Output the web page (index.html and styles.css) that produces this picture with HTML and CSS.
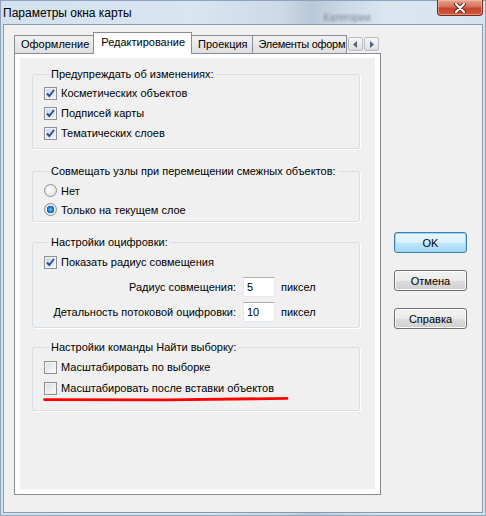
FILE: index.html
```html
<!DOCTYPE html>
<html lang="ru">
<head>
  <meta charset="UTF-8" />
  <title>Параметры окна карты</title>
  <link rel="stylesheet" href="styles.css">
</head>
<body>
  <div class="window">
    <div class="titlebar">
      <span class="title">Параметры окна карты</span>
      <span class="ghost">Категории</span>
      <div class="close">
        <svg width="18" height="10" viewBox="0 0 18 10">
          <path d="M5 1 L13 9 M13 1 L5 9" stroke="#5a2c22" stroke-width="4" stroke-linecap="round"/>
          <path d="M5 1 L13 9 M13 1 L5 9" stroke="#fff" stroke-width="2" stroke-linecap="round"/>
        </svg>
      </div>
    </div>

    <div class="client">
      <div class="tabs-area">
        <div class="tabstrip">
          <div class="tab">Оформление</div>
          <div class="tab active">Редактирование</div>
          <div class="tab">Проекция</div>
          <div class="tab last">Элементы оформ</div>
          <div class="tab-scroll">
            <span class="scroll-btn">
              <svg width="5" height="7" viewBox="0 0 5 7"><path d="M4 0 L0 3.5 L4 7 Z" fill="#4d6185"/></svg>
            </span>
            <span class="scroll-btn">
              <svg width="5" height="7" viewBox="0 0 5 7"><path d="M1 0 L5 3.5 L1 7 Z" fill="#4d6185"/></svg>
            </span>
          </div>
        </div>

        <div class="panel">
          <div class="page">

            <fieldset class="group group-warn">
              <legend>Предупреждать об изменениях:</legend>
              <div class="row"><span class="check on"></span>Косметических объектов</div>
              <div class="row"><span class="check on"></span>Подписей карты</div>
              <div class="row"><span class="check on"></span>Тематических слоев</div>
            </fieldset>

            <fieldset class="group group-snap">
              <legend>Совмещать узлы при перемещении смежных объектов:</legend>
              <div class="row short"><span class="radio"></span>Нет</div>
              <div class="row short"><span class="radio on"></span>Только на текущем слое</div>
            </fieldset>

            <fieldset class="group group-digit">
              <legend>Настройки оцифровки:</legend>
              <div class="row"><span class="check on"></span>Показать радиус совмещения</div>
              <div class="field-row">
                <span class="field-label">Радиус совмещения:</span>
                <span class="input">5</span>
                <span class="unit">пиксел</span>
              </div>
              <div class="field-row">
                <span class="field-label">Детальность потоковой оцифровки:</span>
                <span class="input">10</span>
                <span class="unit">пиксел</span>
              </div>
            </fieldset>

            <fieldset class="group group-find">
              <legend>Настройки команды Найти выборку:</legend>
              <div class="row"><span class="check"></span>Масштабировать по выборке</div>
              <div class="row"><span class="check"></span>Масштабировать после вставки объектов</div>
              <svg class="mark" width="250" height="7" viewBox="0 0 250 7">
                <path d="M1.5 4.6 L122 4.8 L244 3.4" stroke="#ff0000" stroke-width="2.8" fill="none" stroke-linecap="round"/>
              </svg>
            </fieldset>

          </div>
        </div>
      </div>

      <div class="buttons">
        <button class="btn default">OK</button>
        <button class="btn">Отмена</button>
        <button class="btn">Справка</button>
      </div>
    </div>
  </div>
</body>
</html>
```

FILE: styles.css
```css
body {
  margin: 0;
  font-family: 'Liberation Sans', Arial, sans-serif;
  font-size: 11px;
  color: #000;
  background: #fff;
}

.window {
  width: 486px;
  height: 516px;
  display: flex;
  flex-direction: column;
  background: linear-gradient(90deg, #d3e1ef 0%, #d9e5f1 40%, #ccd9e6 58%, #b9c8d8 64%, #c9d6e4 70%, #dbe6f1 80%, #d6e2ee 100%);
  box-sizing: border-box;
  border: 1px solid #8ea4bd;
}

/* title bar */
.titlebar {
  height: 23px;
  display: flex;
  align-items: flex-start;
}

.title {
  font-size: 12px;
  margin: 5px 0 0 2px;
  color: #000;
}

.ghost {
  font-size: 10px;
  color: #7d8a99;
  filter: blur(1.2px);
  margin: 11px 0 0 192px;
}

.close {
  margin-left: auto;
  margin-right: 2px;
  margin-top: -1px;
  width: 44px;
  height: 15px;
  border: 1px solid #6b2e24;
  border-top: none;
  border-radius: 0 0 4px 4px;
  background: linear-gradient(#e8a393 0%, #d6705a 45%, #c7442b 55%, #d0593d 100%);
  box-shadow: inset 0 0 0 1px rgba(255, 200, 180, 0.5);
  display: flex;
  align-items: center;
  justify-content: center;
}

/* client area */
.client {
  flex: 1;
  margin: 0 2px 2px 2px;
  border: 1px solid #8a9bb0;
  background: #f0f0f0;
  display: flex;
  align-items: flex-start;
}

.tabs-area {
  margin: 7px 0 0 10px;
  width: 367px;
}

.tabstrip {
  display: flex;
  align-items: flex-end;
  height: 21px;
}

.tab {
  height: 17px;
  line-height: 17px;
  padding: 0 4px 0 6px;
  border: 1px solid #898c95;
  border-bottom: none;
  border-right: none;
  background: linear-gradient(#f2f2f2, #dedede);
  white-space: nowrap;
}

.tab.active {
  height: 21px;
  line-height: 19px;
  margin-bottom: -1px;
  padding: 0 6px 0 7px;
  background: #fff;
  border-right: 1px solid #898c95;
  position: relative;
  z-index: 1;
}

.tab.active + .tab {
  border-left: none;
}

.tab.last {
  padding-right: 1px;
  letter-spacing: -0.3px;
  border-right: 1px solid #898c95;
}

.tab-scroll {
  display: flex;
  gap: 1px;
  margin: 0 0 2px 1px;
}

.scroll-btn {
  width: 13px;
  height: 12px;
  border: 1px solid #b8bcc4;
  border-radius: 2px;
  background: linear-gradient(#f6f6f6, #dfdfdf);
  display: flex;
  align-items: center;
  justify-content: center;
}

.panel {
  height: 431px;
  border: 1px solid #898c95;
  background: #fff;
  padding: 4px 5px 5px 5px;
}

.page {
  height: 100%;
  background: #f0f0f0;
  padding: 10px 15px 0 12px;
  box-sizing: border-box;
}

/* group boxes */
.group {
  margin: 0;
  padding: 2px 0 5px 11px;
  border: 1px solid #d5dfe5;
  border-radius: 3px;
  box-shadow: 1px 1px 0 #fff;
  min-width: 0;
}

.group legend {
  padding: 0 2px;
  margin-left: 5px;
  line-height: 13px;
}

.group-snap {
  margin-top: 16px;
  padding-top: 3px;
  padding-bottom: 2px;
}

.group-digit {
  margin-top: 14px;
  padding-top: 3px;
  padding-bottom: 5px;
}

.group-find {
  margin-top: 13px;
  padding-top: 3px;
  padding-bottom: 12px;
  position: relative;
}

.row {
  height: 20px;
  display: flex;
  align-items: center;
  gap: 4px;
}

.row.short {
  height: 19px;
}

.group-find .row + .row {
  margin-top: 1px;
}

.check {
  width: 11px;
  height: 11px;
  border: 1px solid #8e8f8f;
  background: linear-gradient(135deg, #dcdcdc, #fbfbfb);
  box-shadow: inset 0 0 0 1px #f4f4f4;
  flex-shrink: 0;
}

.check.on {
  background:
    url("data:image/svg+xml,%3Csvg xmlns='http://www.w3.org/2000/svg' width='11' height='11'%3E%3Cpath d='M2 5.5 L4.3 8 L9 2' stroke='%23334e8c' stroke-width='2' fill='none'/%3E%3C/svg%3E"),
    linear-gradient(135deg, #c7d6ec, #eef3fb);
}

.radio {
  width: 11px;
  height: 11px;
  border: 1px solid #8e8f8f;
  border-radius: 50%;
  background: radial-gradient(circle at 40% 40%, #fff, #d8d8d8);
  flex-shrink: 0;
}

.radio.on {
  background: radial-gradient(circle, #5fc6f6 0, #1e7fc9 2.5px, #194f9a 3.5px, #e8eef6 4px, #d0d6de 100%);
}

.field-row {
  height: 20px;
  display: flex;
  align-items: center;
  margin-top: 5px;
}

.field-label {
  width: 194px;
  text-align: right;
  margin-left: -2px;
}

.input {
  width: 27px;
  height: 18px;
  line-height: 18px;
  margin-left: 7px;
  padding-left: 3px;
  background: #fff;
  border: 1px solid #e3e9ef;
  border-top-color: #abadb3;
}

.unit {
  margin-left: 6px;
}

.mark {
  position: absolute;
  left: 10px;
  bottom: 8px;
}

/* dialog buttons */
.buttons {
  margin: 207px 0 0 13px;
  display: flex;
  flex-direction: column;
  gap: 17px;
}

.btn {
  width: 73px;
  height: 21px;
  font-family: inherit;
  font-size: 11px;
  border: 1px solid #707070;
  border-radius: 3px;
  background: linear-gradient(#f2f2f2 0%, #ebebeb 50%, #dddddd 51%, #cfcfcf 100%);
  box-shadow: inset 0 0 0 1px #fcfcfc;
  padding: 0;
  color: #000;
}

.btn.default {
  border-color: #3c7fb1;
  background: linear-gradient(#eaf6fd 0%, #d9f0fc 50%, #bee6fd 51%, #a7d9f5 100%);
  box-shadow: inset 0 0 0 1px #98d6f4;
}
```
